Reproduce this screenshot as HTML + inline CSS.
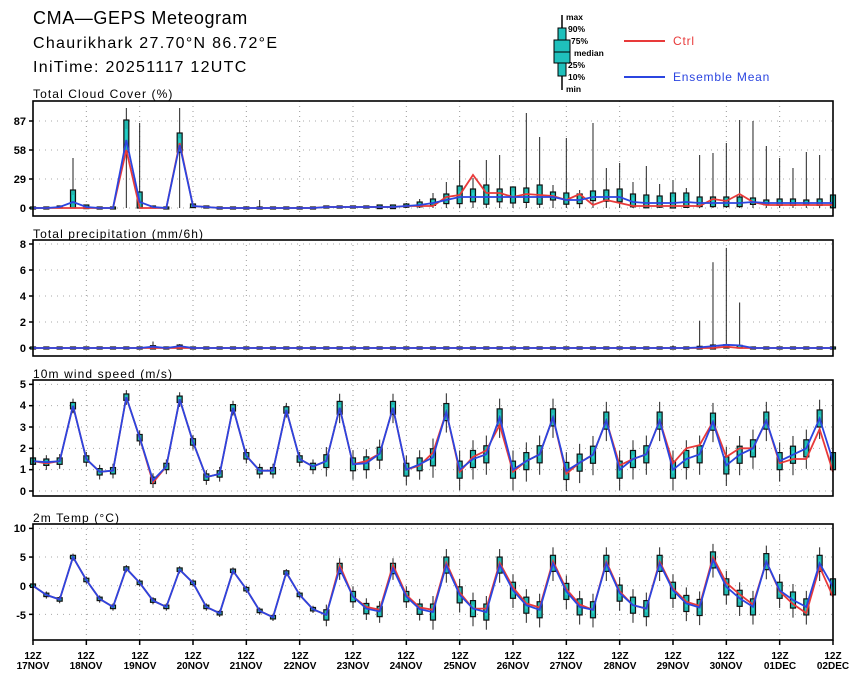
<!DOCTYPE html>
<html><head><meta charset="utf-8"><style>
html,body{margin:0;padding:0;background:#fff;width:860px;height:678px;overflow:hidden}
svg{display:block}
text{font-family:"Liberation Sans","DejaVu Sans",sans-serif}
</style></head><body>
<svg id="s" width="860" height="678" viewBox="0 0 860 678" xmlns="http://www.w3.org/2000/svg">
<text x="33" y="24" font-size="18" letter-spacing="0.6" fill="#000">CMA—GEPS Meteogram</text>
<text x="33" y="48" font-size="16" letter-spacing="1.3" fill="#000">Chaurikhark 27.70°N 86.72°E</text>
<text x="33" y="72" font-size="16" letter-spacing="1.3" fill="#000">IniTime: 20251117 12UTC</text>
<g font-size="12" fill="#000" letter-spacing="1.1">
<text x="33" y="98">Total Cloud Cover (%)</text>
<text x="33" y="238">Total precipitation (mm/6h)</text>
<text x="33" y="378">10m wind speed (m/s)</text>
<text x="33" y="522">2m Temp (°C)</text>
</g>
<g font-size="11" font-weight="bold" text-anchor="end" fill="#000">
<text x="26" y="125">87</text><text x="26" y="154">58</text><text x="26" y="183">29</text><text x="26" y="212">0</text>
<text x="26" y="248">8</text><text x="26" y="274">6</text><text x="26" y="300">4</text><text x="26" y="326">2</text><text x="26" y="352">0</text>
<text x="26" y="388">5</text><text x="26" y="409">4</text><text x="26" y="431">3</text><text x="26" y="452">2</text><text x="26" y="473">1</text><text x="26" y="495">0</text>
<text x="26" y="532">10</text><text x="26" y="561">5</text><text x="26" y="590">0</text><text x="26" y="619">-5</text>
</g>
<g font-size="10" font-weight="bold" text-anchor="middle" fill="#000">
<text x="33" y="659">12Z</text><text x="33" y="669">17NOV</text>
<text x="86" y="659">12Z</text><text x="86" y="669">18NOV</text>
<text x="140" y="659">12Z</text><text x="140" y="669">19NOV</text>
<text x="193" y="659">12Z</text><text x="193" y="669">20NOV</text>
<text x="246" y="659">12Z</text><text x="246" y="669">21NOV</text>
<text x="300" y="659">12Z</text><text x="300" y="669">22NOV</text>
<text x="353" y="659">12Z</text><text x="353" y="669">23NOV</text>
<text x="406" y="659">12Z</text><text x="406" y="669">24NOV</text>
<text x="460" y="659">12Z</text><text x="460" y="669">25NOV</text>
<text x="513" y="659">12Z</text><text x="513" y="669">26NOV</text>
<text x="566" y="659">12Z</text><text x="566" y="669">27NOV</text>
<text x="620" y="659">12Z</text><text x="620" y="669">28NOV</text>
<text x="673" y="659">12Z</text><text x="673" y="669">29NOV</text>
<text x="726" y="659">12Z</text><text x="726" y="669">30NOV</text>
<text x="780" y="659">12Z</text><text x="780" y="669">01DEC</text>
<text x="833" y="659">12Z</text><text x="833" y="669">02DEC</text>
</g>
<!-- legend -->
<line x1="562" y1="15" x2="562" y2="90" stroke="#000" stroke-width="1.5"/>
<rect x="558" y="28" width="8" height="48" fill="#1fc0bc" stroke="#000"/>
<rect x="554" y="40" width="16" height="23" fill="#1fc0bc" stroke="#000"/>
<line x1="554" y1="52" x2="570" y2="52" stroke="#000"/>
<g font-size="8.5" font-weight="bold" fill="#000">
<text x="566" y="20">max</text><text x="568" y="32">90%</text><text x="571" y="44">75%</text>
<text x="574" y="56">median</text><text x="568" y="68">25%</text><text x="568" y="80">10%</text><text x="566" y="92">min</text>
</g>
<line x1="624" y1="41" x2="665" y2="41" stroke="#e83a3a" stroke-width="2"/>
<text x="673" y="45" font-size="12" letter-spacing="0.8" fill="#e83a3a">Ctrl</text>
<line x1="624" y1="77" x2="665" y2="77" stroke="#2b45e0" stroke-width="2"/>
<text x="673" y="81" font-size="12" letter-spacing="0.8" fill="#2b45e0">Ensemble Mean</text>
<g id="g"></g>
</svg>
<script>
var NS="http://www.w3.org/2000/svg",g=document.getElementById("g");
function el(t,a){var e=document.createElementNS(NS,t);for(var k in a)e.setAttribute(k,a[k]);g.appendChild(e);return e;}
function X(i){return 33+13.333*i;}
var P=[{t:101,b:216,y0:208,k:1,h:[87,58,29,0]},{t:240,b:356,y0:348,k:13,h:[8,6,4,2,0]},{t:380,b:496,y0:491,k:21.33,h:[5,4,3,2,1,0]},{t:524,b:640,y0:585.7,k:5.73,h:[10,5,0,-5]}];
var N=61;
var cB=[0,0,1,6,1,0,0,68,6,1,0,63,2,1,0,0,0,0,0,0,0,0,1,1,1,1,1,1,2,3,5,8,11,11,11,11,11,11,11,11,8,8,11,11,11,6,5,5,5,6,5,5,5,5,6,5,5,5,5,5,5];
var cR=[0,0,0,0,0,0,0,58,0,0,0,65,2,1,0,0,0,0,0,0,0,0,1,1,1,1,1,1,2,2,2,11,13,33,15,15,11,14,13,12,8,14,3,8,5,2,2,2,2,2,2,9,7,14,6,3,3,3,3,3,3];
var cS=[0,0,0,12,1,0,0,20,10,0,0,12,1,0,0,0,0,0,0,0,0,0,0,0,0,0,1,1,2,3,4,6,11,8,12,8,10,9,12,5,7,6,6,7,8,8,8,7,10,9,6,6,6,6,4,3,4,4,3,4,8];
var cW=[0,0,0,50,1,0,0,100,85,0,0,100,1,0,0,0,0,8,0,0,0,0,0,0,0,0,1,2,5,9,15,26,48,30,48,53,20,95,71,23,70,18,85,40,45,26,42,24,28,20,53,55,65,88,87,62,50,40,56,53,48];
var pB=[],pR=[],pS=[],pW=[];for(var i=0;i<N;i++){pB.push(0);pR.push(0);pS.push(0);pW.push(0);}
pB[9]=0.1;pB[11]=0.15;pW[9]=0.5;pW[11]=0.3;pB[51]=0.15;pB[52]=0.25;pB[53]=0.2;pB[50]=0.05;pR[52]=0.1;
pW[50]=2.1;pW[51]=6.6;pW[52]=7.7;pW[53]=3.5;pW[48]=0.2;
var wB=[1.4,1.35,1.4,4.0,1.5,0.9,0.95,4.4,2.5,0.5,1.15,4.3,2.3,0.65,0.8,3.9,1.65,0.95,0.95,3.8,1.5,1.15,1.4,3.9,1.25,1.3,1.75,3.9,1.0,1.25,1.58,3.7,1.0,1.5,1.72,3.45,1.0,1.4,1.72,3.45,0.94,1.33,1.7,3.3,1.0,1.5,1.72,3.3,1.0,1.5,1.72,3.25,1.2,1.7,2.0,3.3,1.4,1.7,2.0,3.4,1.4];
var wR=wB.slice();wR[1]=1.3;wR[9]=0.4;wR[35]=3.1;wR[32]=0.9;wR[36]=0.9;wR[40]=0.8;wR[44]=1.2;wR[48]=1.3;wR[49]=2.0;wR[50]=2.15;wR[52]=1.6;wR[53]=2.0;wR[54]=2.0;wR[56]=1.3;wR[57]=1.5;wR[58]=1.5;wR[59]=2.9;wR[60]=0.9;wR[25]=1.4;wR[29]=1.2;wR[30]=1.8;wR[33]=1.6;wR[34]=1.9;
var tB=[0,-1.6,-2.4,5,1,-2.3,-3.7,3,0.5,-2.6,-3.7,2.8,0.5,-3.7,-4.8,2.6,-0.6,-4.4,-5.5,2.3,-1.6,-4.1,-5.1,3.0,-1.9,-4.0,-4.5,3.0,-1.9,-4.1,-4.6,3.6,-1.6,-4,-4.6,3.6,-0.8,-3.4,-4.2,3.9,-1,-3.7,-4.2,3.9,-1.3,-3.4,-4,3.9,-0.8,-3.1,-3.8,4.5,-0.2,-2.2,-3.7,4.2,-0.8,-2.5,-3.7,3.9,-0.2];
var tR=tB.slice();tR[23]=3.6;tR[25]=-3.7;tR[26]=-4.2;tR[27]=3.6;tR[28]=-1.6;tR[29]=-3.8;tR[30]=-4.2;tR[31]=4;tR[32]=-1.2;tR[34]=-4.0;tR[35]=4;tR[36]=-0.3;tR[37]=-3.1;tR[38]=-3.8;tR[39]=4.3;tR[40]=-0.6;tR[41]=-3.3;tR[43]=4.2;tR[44]=-1;tR[47]=4.2;tR[48]=-0.5;tR[49]=-2.8;tR[50]=-3.5;tR[51]=5;tR[52]=0.5;tR[53]=-1.5;tR[54]=-3.3;tR[56]=-1;tR[57]=-3.2;tR[58]=-4.8;tR[59]=3.3;tR[60]=-1.9;
function spreadT(i){return i<22?0.3:(i<30?0.9:1.4);} function spreadW(i){return i<22?0.15:(i<30?0.3:0.4);}
var D=[[cB,cR],[pB,pR],[wB,wR],[tB,tR]];
P.forEach(function(p,pi){
  for(var d=1;d<15;d++){var x=33+53.333*d;el("line",{x1:x,y1:p.t,x2:x,y2:p.b,stroke:"#999","stroke-width":1,"stroke-dasharray":"1,4"});}
  p.h.forEach(function(v){var y=p.y0-v*p.k;el("line",{x1:33,y1:y,x2:833,y2:y,stroke:"#aaa","stroke-width":1,"stroke-dasharray":"1,5"});el("line",{x1:29,y1:y,x2:33,y2:y,stroke:"#000","stroke-width":1.5});});
  var B=D[pi][0],R=D[pi][1];
  for(var i=0;i<N;i++){
    var x=X(i),m=B[i],lo,hi,s,w,wl;
    if(pi==0){s=cS[i];hi=Math.min(100,m+s);lo=Math.max(0,m-s*0.6);w=Math.max(hi,cW[i]);wl=0;}
    else if(pi==1){s=0;hi=m;lo=0;w=pW[i];wl=0;}
    else if(pi==2){s=spreadW(i);hi=m+s;lo=m-s;w=m+s*2.2;wl=m-s*2.4;if(wl<0)wl=0;}
    else {s=spreadT(i);hi=m+s;lo=m-s;w=m+s*2;wl=m-s*2.2;}
    var Y=function(v){return p.y0-v*p.k;};
    if(w>hi||wl<lo)el("line",{x1:x,y1:Y(w),x2:x,y2:Y(Math.min(wl,lo)),stroke:"#222","stroke-width":1});
    var y1=Y(hi),y2=Y(lo);if(y2-y1<2){y1-=1;y2+=1;}
    el("rect",{x:x-2.5,y:y1,width:5,height:y2-y1,fill:"#1fb8b0",stroke:"#111","stroke-width":1.2});
    var ih=(y2-y1)*0.45;el("rect",{x:x-1,y:(y1+y2)/2-ih/2,width:2,height:ih,fill:"#22d0c8"});
  }
  var pr="",pb="";for(var i=0;i<N;i++){pr+=X(i).toFixed(1)+","+(p.y0-R[i]*p.k).toFixed(1)+" ";pb+=X(i).toFixed(1)+","+(p.y0-B[i]*p.k).toFixed(1)+" ";}
  el("polyline",{points:pr,fill:"none",stroke:"#e83a3a","stroke-width":1.8});
  el("polyline",{points:pb,fill:"none",stroke:"#2b45e0","stroke-width":1.8});
  el("rect",{x:33,y:p.t,width:800,height:p.b-p.t,fill:"none",stroke:"#000","stroke-width":1.6});
  if(pi==3){for(var d=0;d<=15;d++){var x=33+53.333*d;el("line",{x1:x,y1:640,x2:x,y2:645,stroke:"#000","stroke-width":1.5});}}
});
</script>
</body></html>
